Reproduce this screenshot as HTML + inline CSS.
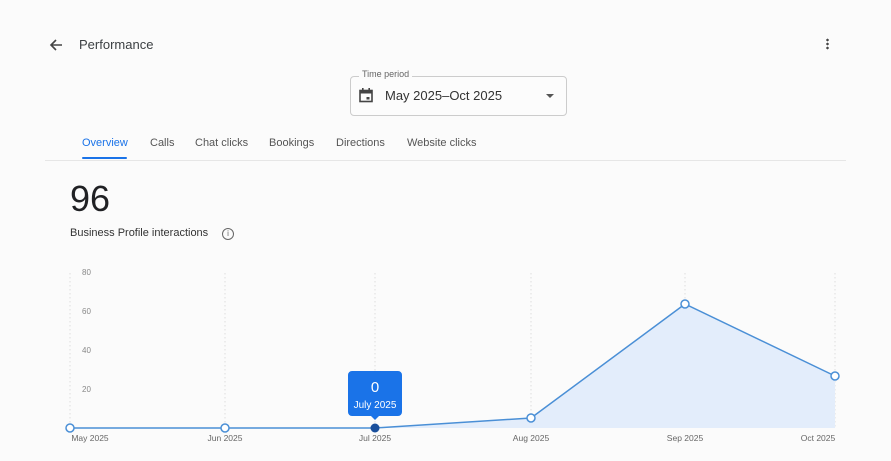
<!DOCTYPE html>
<html><head><meta charset="utf-8"><style>
body{margin:0;width:891px;height:461px;background:#fbfbfb;font-family:"Liberation Sans",Arial,sans-serif;position:relative;overflow:hidden;color:#3c4043}
.a{position:absolute;white-space:nowrap}
</style></head><body>
<svg class="a" style="left:48px;top:37px" width="16" height="16" viewBox="0 0 16 16"><path d="M14 8H3M8 3L3 8l5 5" stroke="#444" stroke-width="1.6" fill="none"/></svg>
<div class="a" style="left:79px;top:37px;font-size:13px;color:#3c4043">Performance</div>
<div class="a" style="left:826px;top:38px;width:3px;height:12px;background:radial-gradient(circle,#444 1.2px,transparent 1.4px) 0 0/3px 4px"></div>
<div class="a" style="left:350px;top:76px;width:215px;height:38px;border:1px solid #ccc;border-radius:4px;background:#fcfcfc"></div>
<div class="a" style="left:359px;top:69px;font-size:9px;color:#666;background:#fbfbfb;padding:0 3px">Time period</div>
<svg class="a" style="left:359px;top:88px" width="14" height="15" viewBox="0 0 14 15"><rect x="1" y="2.5" width="12" height="11" fill="none" stroke="#444" stroke-width="1.6"/><rect x="1" y="2.5" width="12" height="3" fill="#444"/><rect x="3" y="0" width="1.6" height="3" fill="#444"/><rect x="9.4" y="0" width="1.6" height="3" fill="#444"/><rect x="7.5" y="9" width="3" height="2.5" fill="#444"/></svg>
<div class="a" style="left:385px;top:88px;font-size:13px;color:#333">May 2025–Oct 2025</div>
<div class="a" style="left:546px;top:94px;border:4px solid transparent;border-top:4px solid #555;border-bottom:0"></div>
<div class="a" style="left:82px;top:137px;font-size:11px;color:#1a73e8">Overview</div>
<div class="a" style="left:82px;top:157px;width:45px;height:2px;background:#1a73e8;border-radius:2px"></div>
<div class="a" style="left:150px;top:137px;font-size:11px;color:#555">Calls</div>
<div class="a" style="left:195px;top:137px;font-size:11px;color:#555">Chat clicks</div>
<div class="a" style="left:269px;top:137px;font-size:11px;color:#555">Bookings</div>
<div class="a" style="left:336px;top:137px;font-size:11px;color:#555">Directions</div>
<div class="a" style="left:407px;top:137px;font-size:11px;color:#555">Website clicks</div>
<div class="a" style="left:45px;top:160px;width:801px;height:1px;background:#e6e6e6"></div>
<div class="a" style="left:70px;top:178px;font-size:36px;color:#202124">96</div>
<div class="a" style="left:70px;top:227px;font-size:11px;color:#333">Business Profile interactions</div>
<div class="a" style="left:222px;top:228px;width:10px;height:10px;border:1px solid #666;border-radius:50%;font-size:8px;line-height:10px;text-align:center;color:#666">i</div>
<div class="a" style="left:82px;top:268px;font-size:8px;color:#888">80</div>
<div class="a" style="left:82px;top:307px;font-size:8px;color:#888">60</div>
<div class="a" style="left:82px;top:346px;font-size:8px;color:#888">40</div>
<div class="a" style="left:82px;top:385px;font-size:8px;color:#888">20</div>
<svg class="a" style="left:0;top:0" width="891" height="461">
<g stroke="#ddd" stroke-dasharray="1.5 2.5"><line x1="70" y1="273" x2="70" y2="428"/><line x1="225" y1="273" x2="225" y2="428"/><line x1="375" y1="273" x2="375" y2="428"/><line x1="531" y1="273" x2="531" y2="428"/><line x1="685" y1="273" x2="685" y2="428"/><line x1="835" y1="273" x2="835" y2="428"/></g>
<polygon points="70,428 225,428 375,428 531,418 685,304 835,376 835,428" fill="#e3edfb"/>
<polyline points="70,428 225,428 375,428 531,418 685,304 835,376" fill="none" stroke="#4a8fd6" stroke-width="1.5"/>
<g fill="#fff" stroke="#4a8fd6" stroke-width="1.5"><circle cx="70" cy="428" r="4"/><circle cx="225" cy="428" r="4"/><circle cx="531" cy="418" r="4"/><circle cx="685" cy="304" r="4"/><circle cx="835" cy="376" r="4"/></g>
<circle cx="375" cy="428" r="4.5" fill="#1a4f9c"/>
<path d="M352 371h46a4 4 0 0 1 4 4v37a4 4 0 0 1-4 4h-19l-4 4-4-4h-19a4 4 0 0 1-4-4v-37a4 4 0 0 1 4-4z" fill="#1a73e8"/>
<text x="375" y="392" fill="#fff" font-size="15" text-anchor="middle" font-family="Liberation Sans">0</text>
<text x="375" y="408" fill="#fff" font-size="10" text-anchor="middle" font-family="Liberation Sans">July 2025</text>
<g fill="#666" font-size="8.5" text-anchor="middle" font-family="Liberation Sans"><text x="90" y="441">May 2025</text><text x="225" y="441">Jun 2025</text><text x="375" y="441">Jul 2025</text><text x="531" y="441">Aug 2025</text><text x="685" y="441">Sep 2025</text><text x="818" y="441">Oct 2025</text></g>
</svg>
</body></html>
